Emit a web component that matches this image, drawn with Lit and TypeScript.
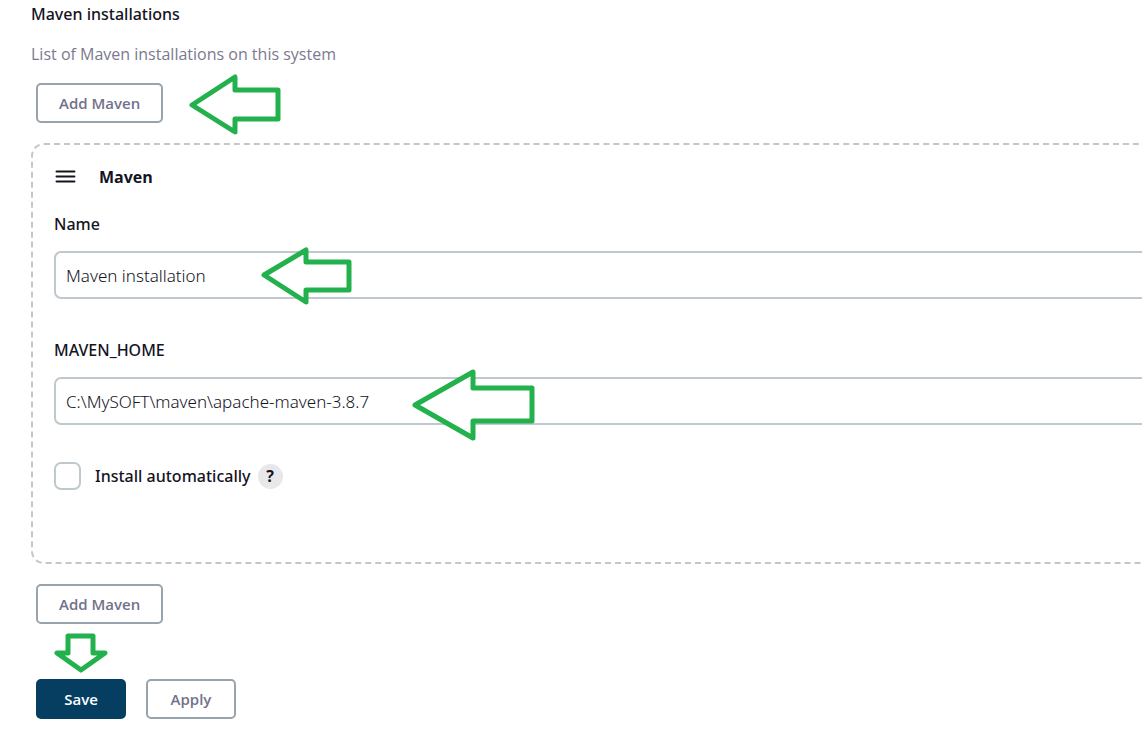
import { LitElement, html, svg, css } from "lit";
import { customElement, property } from "lit/decorators.js";

@customElement("callout-arrow")
class CalloutArrow extends LitElement {
  @property() points = "";
  @property({ type: Number }) w = 0;
  @property({ type: Number }) h = 0;

  static styles = css`
    :host {
      display: block;
      pointer-events: none;
    }
    svg {
      display: block;
    }
    polygon {
      fill: #fff;
      stroke: #22b14c;
      stroke-width: 5;
      stroke-linejoin: round;
    }
  `;

  render() {
    return html`<svg width=${this.w} height=${this.h} viewBox="0 0 ${this.w} ${this.h}" aria-hidden="true">
      ${svg`<polygon points=${this.points}></polygon>`}
    </svg>`;
  }
}

@customElement("app-root")
class AppRoot extends LitElement {
  static styles = css`
    :host {
      display: block;
      overflow: hidden;
      background: #fff;
      color: #14141f;
      font-family: "Segoe UI", "Noto Sans", "Open Sans", sans-serif;
      font-size: 16px;
      line-height: 24px;
    }
    * {
      box-sizing: border-box;
    }
    main {
      padding: 2px 0 32px 31px;
    }
    h1,
    h2,
    p {
      margin: 0;
      font-size: 16px;
    }
    h1 {
      font-weight: 500;
    }
    h2 {
      font-family: "Segoe UI", "Open Sans", sans-serif;
      font-weight: 700;
    }
    .description {
      margin-top: 16px;
      color: #7b798f;
      font-family: "Segoe UI", "Open Sans", sans-serif;
    }
    .row {
      position: relative;
      display: flex;
      gap: 20px;
      padding-left: 5px;
    }
    .row.add {
      margin-top: 17px;
    }
    .row.again {
      margin-top: 20px;
    }
    .row.actions {
      margin-top: 55px;
    }
    button {
      font: 600 15px/20px "Segoe UI", "Open Sans", "Noto Sans", sans-serif;
      height: 40px;
      min-width: 90px;
      padding: 0 21px;
      border: 2px solid #98a4ad;
      border-radius: 5px;
      background: #fff;
      color: #73718a;
    }
    button.primary {
      border-color: #063e61;
      background: #063e61;
      color: #fff;
    }
    .panel {
      margin-top: 20px;
      padding: 20px 0 72px 21px;
      border: 2px dashed #c3c7ca;
      border-right: 0;
      border-radius: 13px 0 0 13px;
    }
    .panel header {
      display: flex;
      align-items: center;
      gap: 23px;
    }
    .handle {
      display: block;
    }
    .field {
      position: relative;
      margin-top: 23px;
    }
    .field + .field {
      margin-top: 39px;
    }
    .field label {
      display: block;
      font-weight: 500;
    }
    .field input {
      display: block;
      width: 100%;
      height: 48px;
      margin: 15px 0 0;
      padding: 0 10px;
      border: 2px solid #bfc8cd;
      border-right: 0;
      border-radius: 7px 0 0 7px;
      background: #fff;
      color: #14141f;
      font: 300 17px/24px "Segoe UI", "Noto Sans", "Open Sans", sans-serif;
      outline: none;
    }
    .check {
      display: flex;
      align-items: center;
      margin-top: 37px;
    }
    .check input {
      appearance: none;
      width: 27px;
      height: 28px;
      margin: 0 14px 0 0;
      border: 2px solid #bfc8cd;
      border-radius: 7px;
      background: #fff;
    }
    .check label {
      font-weight: 500;
    }
    .help {
      display: grid;
      place-items: center;
      width: 25px;
      height: 25px;
      margin-left: 7px;
      border-radius: 50%;
      background: #e8e8ea;
      color: #14141f;
      font-size: 16px;
      font-weight: 700;
      line-height: 20px;
      text-decoration: none;
    }
    callout-arrow {
      position: absolute;
    }
    .at-add {
      left: 157px;
      top: -10px;
    }
    .at-name {
      left: 206px;
      top: 34px;
    }
    .at-home {
      left: 358px;
      top: 30px;
    }
    .at-save {
      left: 22px;
      top: -47px;
    }
  `;

  render() {
    return html`
      <main>
        <h1>Maven installations</h1>
        <p class="description">List of Maven installations on this system</p>
        <div class="row add">
          <button type="button">Add Maven</button>
          <callout-arrow class="at-add" w="94" h="63"
            points="4,32 47,4 47,17 90,17 90,46 47,46 47,59"></callout-arrow>
        </div>

        <section class="panel">
          <header>
            <svg class="handle" width="22" height="14" viewBox="0 0 22 14" aria-hidden="true">
              <path d="M2.5 1.5h18M2.5 6.5h18M2.5 11.5h18" stroke="#14141f" stroke-width="1.9" stroke-linecap="round" />
            </svg>
            <h2>Maven</h2>
          </header>
          <div class="field">
            <label for="name">Name</label>
            <input id="name" type="text" value="Maven installation" />
            <callout-arrow class="at-name" w="94" h="60"
              points="4,29 46,4 46,16 89,16 89,44 46,44 46,56"></callout-arrow>
          </div>
          <div class="field">
            <label for="home">MAVEN_HOME</label>
            <input id="home" type="text" value="C:\\MySOFT\\maven\\apache-maven-3.8.7" />
            <callout-arrow class="at-home" w="126" h="76"
              points="3,37 61,4 61,20 120,20 120,53 61,53 61,70"></callout-arrow>
          </div>
          <div class="check">
            <input id="auto" type="checkbox" />
            <label for="auto">Install automatically</label>
            <a class="help" href="#help" aria-label="Help for Install automatically">?</a>
          </div>
        </section>

        <div class="row again">
          <button type="button">Add Maven</button>
        </div>
        <div class="row actions">
          <button type="button" class="primary">Save</button>
          <button type="button">Apply</button>
          <callout-arrow class="at-save" w="56" h="42"
            points="15,4 40,4 40,21 52,21 28,38 4,21 15,21"></callout-arrow>
        </div>
      </main>
    `;
  }
}
